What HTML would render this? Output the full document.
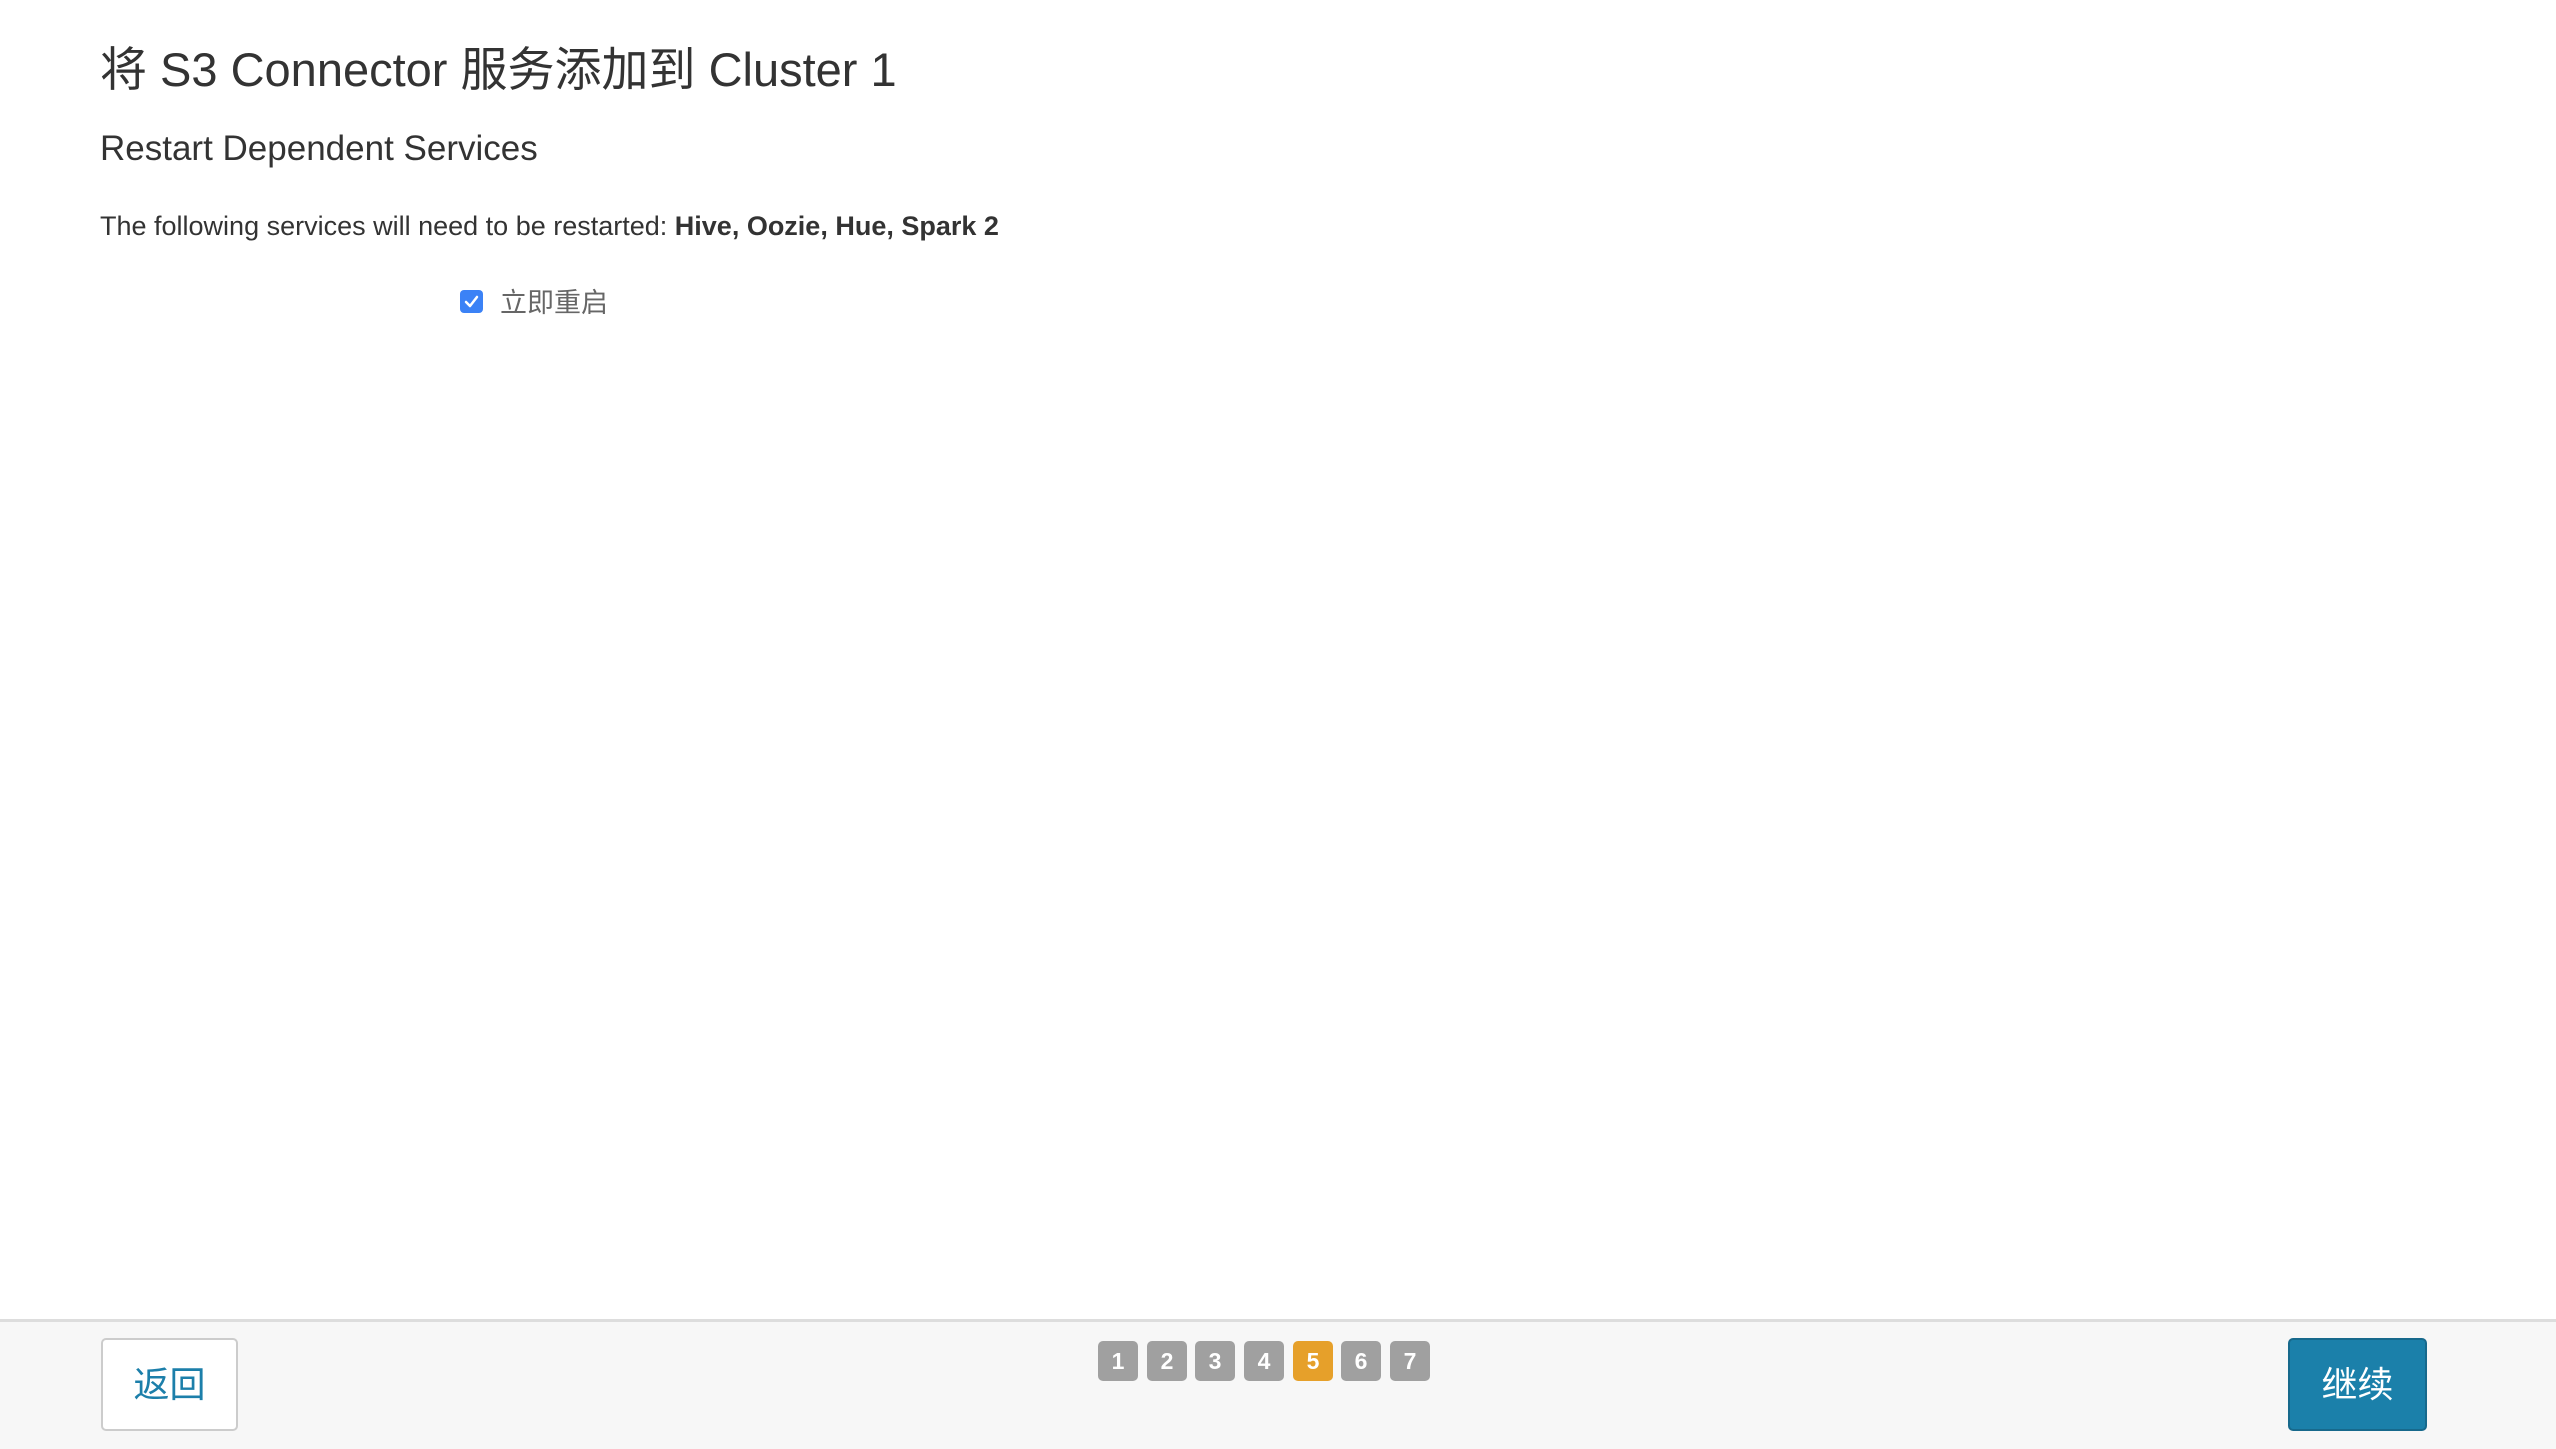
<!DOCTYPE html>
<html><head><meta charset="utf-8"><style>
body{margin:0;width:2556px;height:1446px;background:#fff;position:relative;overflow:hidden;font-family:"Liberation Sans","Noto Sans CJK SC",sans-serif;color:#333}
.a{position:absolute;white-space:nowrap}
#t{left:100px;top:40px;font-size:47px;line-height:60px;color:#333}
#s{left:100px;top:128px;font-size:35px;line-height:42px;color:#333}
#p{left:100px;top:210px;font-size:27px;line-height:32px;color:#333}
#cb{left:460px;top:290px;width:23px;height:23px;background:#3b82f6;border-radius:4px}
#lb{left:500px;top:286px;font-size:27px;line-height:34px;color:#666}
#f{position:absolute;left:0;top:1319px;width:2556px;height:127px;background:#f7f7f7;border-top:3px solid #ddd}
.btn{position:absolute;top:1338px;height:93px;width:137px;border-radius:5px;box-sizing:border-box;font-size:36px;line-height:89px;text-align:center}
#b{left:101px;background:#fff;border:2px solid #ccc;color:#1c7faa}
#c{left:2288px;width:139px;background:#1b80aa;border:2px solid #17698c;color:#fff}
.st{position:absolute;top:1341px;width:40px;height:40px;border-radius:5px;background:#a0a0a0;color:#fff;font-weight:bold;font-size:23px;line-height:40px;text-align:center}
</style></head><body>
<div class="a" id="t">将 S3 Connector 服务添加到 Cluster 1</div>
<div class="a" id="s">Restart Dependent Services</div>
<div class="a" id="p">The following services will need to be restarted: <b>Hive, Oozie, Hue, Spark 2</b></div>
<div class="a" id="cb"><svg width="23" height="23" viewBox="0 0 23 23"><path d="M6 12l4 4 7-9" stroke="#fff" stroke-width="2.5" fill="none" stroke-linecap="round" stroke-linejoin="round"/></svg></div>
<div class="a" id="lb">立即重启</div>
<div id="f"></div>
<div class="btn" id="b">返回</div>
<div class="btn" id="c">继续</div>
<div class="st" style="left:1098px">1</div>
<div class="st" style="left:1147px">2</div>
<div class="st" style="left:1195px">3</div>
<div class="st" style="left:1244px">4</div>
<div class="st" style="left:1293px;background:#e6a02a">5</div>
<div class="st" style="left:1341px">6</div>
<div class="st" style="left:1390px">7</div>
</body></html>
